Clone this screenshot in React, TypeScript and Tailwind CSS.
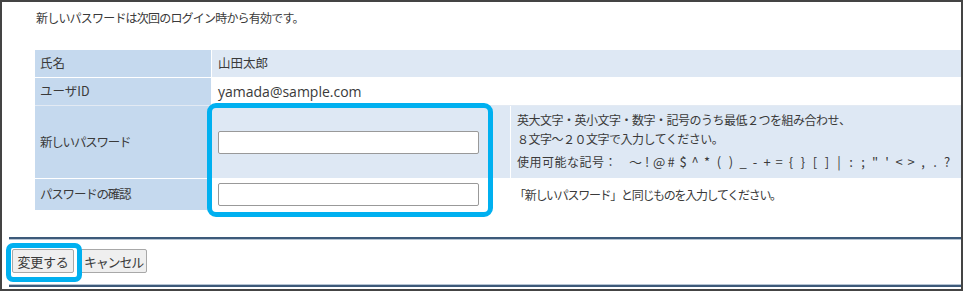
const font = { fontFamily: '"Noto Sans CJK JP", "Noto Sans", sans-serif' };

const symbols = ["～", "!", "@", "#", "$", "^", "*", "(", ")", "_", "-", "+", "=", "{", "}", "[", "]", "|", ":", ";", '"', "'", "<", ">", ",", ".", "?"];

const App = () => {
  return (
    <div
      className="relative w-[964px] h-[292px] bg-white text-[#3a3a3a] overflow-hidden"
      style={font}
    >
      <div className="absolute inset-0 right-[1px] bottom-[1px] border-2 border-[#444] pointer-events-none" />

      <div className="pl-[36px] pt-[9px] h-[50px] text-[12px] tracking-[-0.8px]">
        新しいパスワードは次回のログイン時から有効です。
      </div>

      <div className="ml-[35px] w-[927px] text-[12.5px]">
        <div className="flex h-[28px] border-b border-white">
          <div className="w-[177px] bg-[#c5d9ee] pl-[5px] flex items-center border-r border-white">
            氏名
          </div>
          <div className="flex-1 bg-[#dee8f4] pl-[6px] flex items-center">山田太郎</div>
        </div>
        <div className="flex h-[28px] border-b border-[#e3eaf3]">
          <div className="w-[177px] bg-[#c5d9ee] pl-[5px] flex items-center border-r border-white">
            ユーザID
          </div>
          <div
            className="flex-1 bg-white pl-[6px] flex items-center text-[14px]"
            style={{ fontFamily: '"Open Sans", "Noto Sans", sans-serif' }}
          >
            yamada@sample.com
          </div>
        </div>
        <div className="flex h-[73px] border-b border-white">
          <div className="w-[177px] bg-[#c5d9ee] pl-[5px] flex items-center border-r border-white tracking-[-1.2px]">
            新しいパスワード
          </div>
          <div className="w-[299px] bg-[#dee8f4] pl-[6px] flex items-center border-r border-white">
            <input
              type="password"
              className="w-[261px] h-[23px] bg-white border border-[#999] rounded-[2px]"
            />
          </div>
          <div className="flex-1 bg-[#dee8f4] pl-[6px] pt-[4px] text-[12px] leading-[19px]">
            <div className="tracking-[-0.5px]">英大文字・英小文字・数字・記号のうち最低２つを組み合わせ、</div>
            <div className="tracking-[-0.5px]">８文字～２０文字で入力してください。</div>
            <div className="mt-[4px] flex items-center">
              <span className="tracking-[0.5px]">使用可能な記号：</span>
              <span className="ml-[12px] flex">
                {symbols.map((s, i) => (
                  <span key={i} className="w-[12px] text-center text-[13px]">
                    {s}
                  </span>
                ))}
              </span>
            </div>
          </div>
        </div>
        <div className="flex h-[31px]">
          <div className="w-[177px] bg-[#c5d9ee] pl-[5px] flex items-center border-r border-white tracking-[-1.2px]">
            パスワードの確認
          </div>
          <div className="w-[299px] bg-white pl-[6px] flex items-center">
            <input
              type="password"
              className="w-[261px] h-[23px] bg-white border border-[#999] rounded-[2px]"
            />
          </div>
          <div className="flex-1 bg-white pl-[3px] flex items-center text-[12px] tracking-[-1.3px]">
            「新しいパスワード」と同じものを入力してください。
          </div>
        </div>
      </div>

      <div className="ml-[9px] mr-[2px] mt-[27px] border-t-2 border-[#3d5a7a] h-[3px] border-b border-b-[#b6c4d3]" />
      <div className="flex gap-[6px] pl-[12px] pt-[9px] h-[44px]">
        <button className="h-[24px] w-[62px] bg-[#efefef] border border-[#a8a8a8] rounded-[2px] text-[13px] leading-none tracking-[-0.3px]">
          変更する
        </button>
        <button className="h-[24px] w-[67px] bg-[#efefef] border border-[#a8a8a8] rounded-[2px] text-[13px] leading-none tracking-[-1.2px]">
          キャンセル
        </button>
      </div>
      <div className="ml-[9px] mr-[2px] border-t border-[#b6c4d3] h-[3px] border-b-2 border-b-[#3d5a7a]" />

      <div className="absolute left-[207px] top-[103px] w-[286px] h-[114px] border-[5px] border-[#00b0f0] rounded-[9px] pointer-events-none" />
      <div className="absolute left-[6px] top-[243px] w-[76px] h-[39px] border-[5px] border-[#00b0f0] rounded-[7px] pointer-events-none" />
    </div>
  );
};

export default App;
